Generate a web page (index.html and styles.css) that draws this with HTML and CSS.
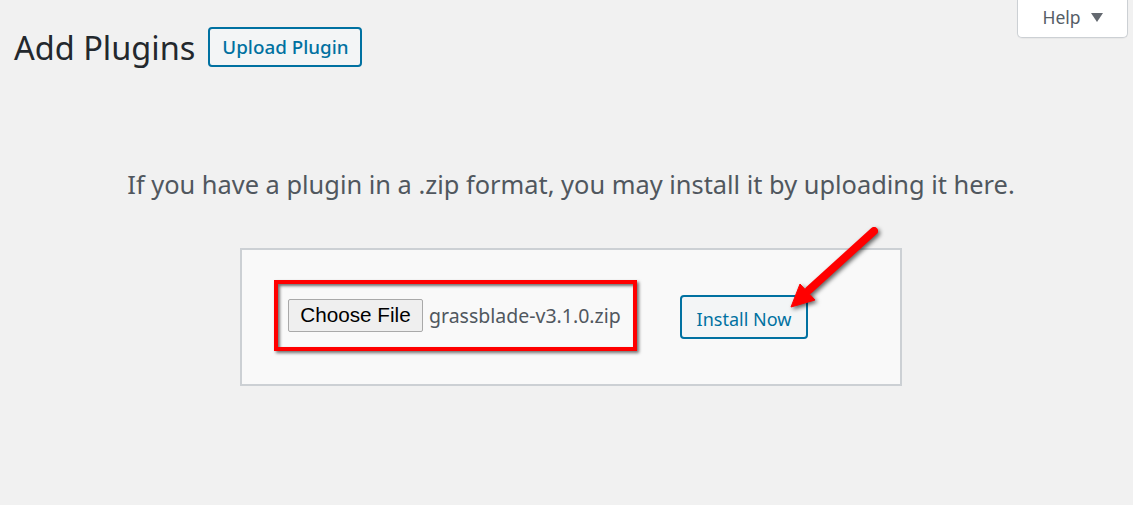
FILE: index.html
```html
<!DOCTYPE html>
<html lang="en">
<head>
    <meta charset="UTF-8">
    <meta name="viewport" content="width=device-width, initial-scale=1.0">
    <title>Add Plugins</title>
    <link rel="stylesheet" href="styles.css">
</head>
<body>
    <div class="wrap">
        <div class="top">
            <div class="heading">
                <h1>Add Plugins</h1>
                <button class="btn upload-btn">Upload Plugin</button>
            </div>
            <div class="help-tab">Help <span class="caret"></span></div>
        </div>

        <p class="install-help">If you have a plugin in a .zip format, you may install it by uploading it here.</p>

        <div class="upload-form">
            <div class="file-box">
                <span class="choose-btn">Choose File</span>
                <span class="file-name">grassblade-v3.1.0.zip</span>
            </div>
            <button class="btn install-btn">Install Now</button>

            <svg class="arrow" width="110" height="100" viewBox="0 0 110 100">
                <g fill="#f00" stroke="#f00">
                    <line x1="96" y1="13" x2="31" y2="72" stroke-width="8" stroke-linecap="round"/>
                    <polygon points="13,89 37,82 22,66" stroke-width="1" stroke-linejoin="round"/>
                </g>
            </svg>
        </div>
    </div>
</body>
</html>
```

FILE: styles.css
```css
body{
    margin: 0;
    background: #f1f1f1;
    font-family: "Noto Sans", "Open Sans", sans-serif;
}
.wrap{
    padding: 0 5px 0 14px;
}
.top{
    display: flex;
    justify-content: space-between;
    align-items: flex-start;
}
.heading{
    display: flex;
    align-items: center;
    gap: 13px;
    padding-top: 27px;
}
h1{
    margin: 0;
    font-size: 32.5px;
    font-weight: 400;
    color: #23282d;
    line-height: 39px;
}
.btn{
    font-family: inherit;
    background: #f3f5f6;
    color: #0071a1;
    border: 2px solid #0071a1;
    border-radius: 4px;
    cursor: pointer;
}
.upload-btn{
    height: 40px;
    padding: 0 12px;
    font-size: 18.8px;
    font-weight: 500;
}
.help-tab{
    width: 111px;
    height: 38px;
    box-sizing: border-box;
    background: #fff;
    border: 1px solid #ccd0d4;
    border-top: none;
    border-radius: 0 0 5px 5px;
    box-shadow: 0 1px 1px rgba(0,0,0,.04);
    display: flex;
    align-items: center;
    justify-content: center;
    gap: 10px;
    padding-bottom: 4px;
    font-size: 17.5px;
    color: #555d66;
}
.caret{
    width: 0;
    height: 0;
    border-left: 6px solid transparent;
    border-right: 6px solid transparent;
    border-top: 9px solid #646970;
    margin-top: 1px;
}
.install-help{
    margin: 0;
    padding-top: 101px;
    text-align: center;
    font-size: 25.4px;
    color: #50575e;
    line-height: 32px;
}
.upload-form{
    position: relative;
    width: 662px;
    height: 138px;
    box-sizing: border-box;
    margin: 48px auto 0;
    background: #f9f9f9;
    border: 2px solid #ccd0d4;
    display: flex;
    align-items: center;
    padding-left: 32px;
    gap: 43px;
}
.file-box{
    display: flex;
    align-items: center;
    width: 363px;
    height: 71px;
    box-sizing: border-box;
    border: 4px solid #f00;
    padding-left: 10px;
    box-shadow: 2px 2px 3px rgba(0,0,0,.55), inset 2px 2px 3px rgba(0,0,0,.55);
    margin-top: -4px;
}
.choose-btn{
    width: 135px;
    height: 33px;
    box-sizing: border-box;
    border: 1px solid #a9a9a9;
    border-radius: 2px;
    background: #efefef;
    font-family: "Liberation Sans", Arial, sans-serif;
    font-size: 20.7px;
    color: #000;
    display: flex;
    align-items: center;
    justify-content: center;
}
.file-name{
    margin-left: 6px;
    font-size: 19.5px;
    color: #50575e;
}
.install-btn{
    width: 128px;
    height: 44px;
    font-size: 18px;
    padding: 0;
    padding-top: 3px;
}
.arrow{
    position: absolute;
    left: 536px;
    top: -32px;
    overflow: visible;
    filter: drop-shadow(2px 2px 2px rgba(0,0,0,.6));
}
```
